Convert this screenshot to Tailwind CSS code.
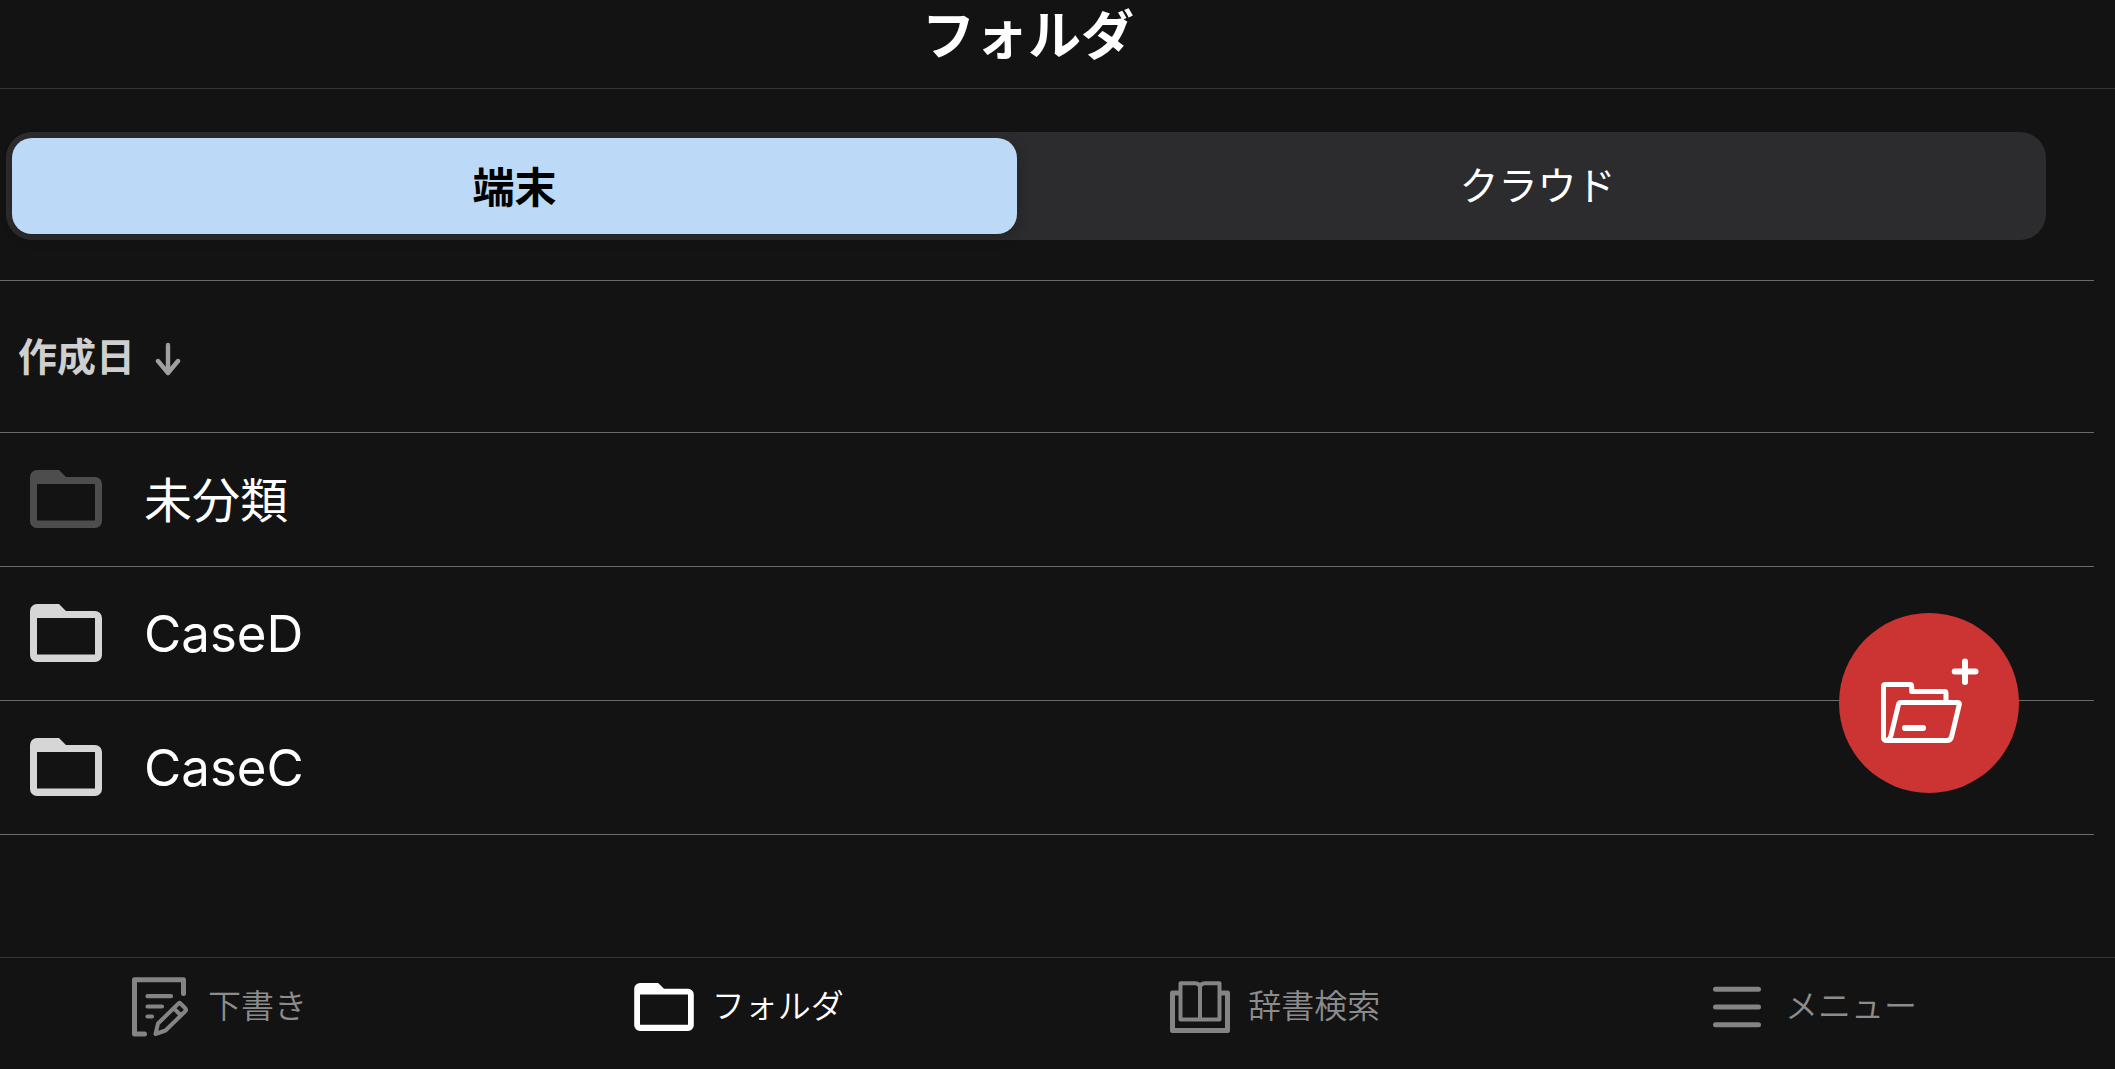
<!DOCTYPE html>
<html lang="ja">
<head>
<meta charset="utf-8">
<meta name="viewport" content="width=device-width, initial-scale=1">
<title>フォルダ</title>
<script src="https://cdn.jsdelivr.net/npm/@tailwindcss/browser@4"></script>
</head>
<body class="flex min-h-screen flex-col bg-[#131313] font-['Inter','Noto_Sans_CJK_JP',sans-serif] text-white">
<svg class="hidden" aria-hidden="true">
  <symbol id="folder" viewBox="0 0 72 58">
    <path fill="currentColor" fill-rule="evenodd" d="M7 0H29L36 7H65a7 7 0 0 1 7 7V51a7 7 0 0 1-7 7H7a7 7 0 0 1-7-7V7a7 7 0 0 1 7-7ZM7 14V50.500H65V14Z"/>
  </symbol>
</svg>

<header class="border-b border-[#343434] pr-[59px] pb-4">
  <h1 class="text-center text-[53px] leading-[72px] font-bold">フォルダ</h1>
</header>

<main class="relative flex-1">
  <div class="pt-[43px] pr-[69px] pb-10 pl-1.5">
    <div role="tablist" class="grid h-[108px] grid-cols-2 gap-x-[18px] rounded-[26px] bg-[#2c2c2e] p-1.5">
      <button type="button" role="tab" aria-selected="true" class="rounded-[20px] bg-[#bdd9f8] pt-0.5 text-[42px] font-bold text-black shadow-[2px_4px_14px_rgba(0,0,0,0.2)]">端末</button>
      <button type="button" role="tab" aria-selected="false" class="rounded-[20px] text-[39px]">クラウド</button>
    </div>
  </div>

  <div class="mr-[21px] border-t border-[#6b6b6b]">
    <button type="button" class="flex h-[151px] items-center gap-5 pl-[18px] text-[39px] font-bold text-[#cfcfcf]">
      <span class="pt-0.5">作成日</span>
      <svg class="mt-1 h-[34px] w-[26px] text-[#a0a0a0]" viewBox="0 0 26 34" fill="none" stroke="currentColor" stroke-width="4.400" stroke-linecap="round" stroke-linejoin="round" aria-hidden="true"><path d="M13 3V30M3 19L13 31L23 19"/></svg>
    </button>
    <ul class="border-t border-[#6b6b6b]">
      <li class="border-b border-[#6b6b6b]"><a href="#" class="flex h-[133px] items-center gap-[42px] pb-0.5 pl-[30px] text-[48px]"><svg class="h-[58px] w-[72px] text-[#4d4d4d]" aria-hidden="true"><use href="#folder"/></svg><span class="pt-1">未分類</span></a></li>
      <li class="border-b border-[#6b6b6b]"><a href="#" class="flex h-[133px] items-center gap-[42px] pb-0.5 pl-[30px] text-[51px]"><svg class="h-[58px] w-[72px] text-[#d6d6d6]" aria-hidden="true"><use href="#folder"/></svg><span class="pt-1">CaseD</span></a></li>
      <li class="border-b border-[#6b6b6b]"><a href="#" class="flex h-[133px] items-center gap-[42px] pb-0.5 pl-[30px] text-[51px]"><svg class="h-[58px] w-[72px] text-[#d6d6d6]" aria-hidden="true"><use href="#folder"/></svg><span class="pt-1">CaseC</span></a></li>
    </ul>
  </div>

  <button type="button" aria-label="フォルダを追加" class="absolute right-24 bottom-[164px] size-[180px] rounded-full bg-[#cc3434]">
    <svg class="size-[180px]" viewBox="0 0 180 180" fill="none" stroke="#fff" stroke-width="5" stroke-linecap="round" stroke-linejoin="round" aria-hidden="true">
      <path d="M107 88V80Q107 78.500 105.500 78.500H72.700V73.500Q72.700 71.600 71 71.600H46.500Q44.500 71.600 44.500 73.500V124Q44.500 127.500 48 127.500H108Q111.500 127.500 112.500 124L120.300 91.500Q120.800 89.500 118.500 89.500H62Q60 89.500 59.500 91.500L52 122.500Q51 126.500 48 127.500"/>
      <path stroke-width="6" d="M66 115H84M126 48.500V69M115.700 58.500H136.500"/>
    </svg>
  </button>
</main>

<nav class="border-t border-[#343434]">
  <ul class="flex h-[111px] justify-between pt-[19px] pr-[198px] pb-3 pl-[130px] text-[33px] font-[350] text-[#8c8c8c]">
    <li><a href="#" class="flex h-[60px] items-center gap-[18px]">
      <svg class="size-[60px]" viewBox="0 0 60 60" fill="none" stroke="#848484" stroke-width="5" stroke-linecap="round" stroke-linejoin="round" aria-hidden="true">
        <path d="M14.500 57H4.500V2.700H53.500V16.500"/>
        <path stroke-width="4.200" d="M17.500 19.200H41M17.500 29.500H32M17.500 39.500H22"/>
        <path stroke-width="4" d="M25.500 57L28 46.500L48.500 26.500Q49.500 25.500 50.500 26.500L55.500 31.500Q56.500 33 55.500 34L35.500 53.500ZM44 31.500L51 38.500"/>
      </svg>下書き</a></li>
    <li><a href="#" aria-current="page" class="flex h-[60px] items-center gap-[18px] text-white"><svg class="h-12 w-[60px]" aria-hidden="true"><use href="#folder"/></svg>フォルダ</a></li>
    <li><a href="#" class="flex h-[60px] items-center gap-[18px]">
      <svg class="size-[60px]" viewBox="0 0 60 60" fill="none" stroke="#848484" stroke-linecap="round" stroke-linejoin="round" aria-hidden="true">
        <path stroke-width="4" d="M30 42.500H10.500V6.300H25Q30 6.300 30 11Q30 6.300 35 6.300H49.500V42.500H30V11"/>
        <path stroke-width="5" stroke-linecap="butt" d="M9 16H2.500V53.500H57.500V16H51"/>
      </svg>辞書検索</a></li>
    <li><a href="#" class="flex h-[60px] items-center gap-[18px]">
      <svg class="size-[60px]" viewBox="0 0 60 60" fill="none" stroke="#848484" stroke-width="5" stroke-linecap="round" aria-hidden="true"><path d="M8.500 12.300H51.500M8.500 30H51.500M8.500 47.700H51.500"/></svg>メニュー</a></li>
  </ul>
</nav>
</body>
</html>
